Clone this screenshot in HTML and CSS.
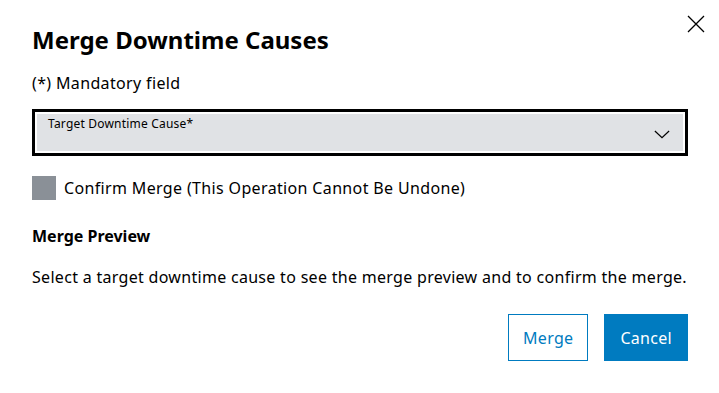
FILE: index.html
```html
<!DOCTYPE html>
<html lang="en">
<head>
    <meta charset="UTF-8">
    <meta name="viewport" content="width=device-width, initial-scale=1.0">
    <title>Merge Downtime Causes</title>
    <link rel="stylesheet" href="styles.css">
</head>
<body>
    <div class="dialog">
        <button class="close-btn" aria-label="Close">
            <svg width="18" height="18" viewBox="0 0 18 18">
                <path d="M1 1 L17 17 M17 1 L1 17" stroke="#000" stroke-width="1.3" fill="none"/>
            </svg>
        </button>
        <h1>Merge Downtime Causes</h1>
        <p class="mandatory">(*) Mandatory field</p>

        <div class="select-wrap">
            <div class="select">
                <span class="select-label">Target Downtime Cause*</span>
                <svg class="chevron" width="18" height="10" viewBox="0 0 18 10">
                    <path d="M1 1 L9 8.5 L17 1" stroke="#000" stroke-width="1.4" fill="none"/>
                </svg>
            </div>
        </div>

        <label class="checkbox-row">
            <span class="checkbox"></span>
            <span>Confirm Merge (This Operation Cannot Be Undone)</span>
        </label>

        <h2>Merge Preview</h2>
        <p class="preview-text">Select a target downtime cause to see the merge preview and to confirm the merge.</p>

        <div class="buttons">
            <button class="btn btn-secondary">Merge</button>
            <button class="btn">Cancel</button>
        </div>
    </div>
</body>
</html>
```

FILE: styles.css
```css
body {
    margin: 0;
    font-family: "Noto Sans", sans-serif;
    background: white;
    color: #000;
}

.dialog {
    position: relative;
    padding: 24px 31px 0 32px;
}

.close-btn {
    position: absolute;
    top: 15px;
    right: 14px;
    background: none;
    border: none;
    padding: 0;
    cursor: pointer;
}

h1 {
    font-size: 24px;
    font-weight: bold;
    margin: 0;
    line-height: 32px;
}

.mandatory {
    font-size: 16px;
    letter-spacing: 0.35px;
    margin: 17px 0 0;
    line-height: 20px;
}

.select-wrap {
    margin-top: 16px;
    border: 3px solid #000;
    padding: 2px;
}

.select {
    background: #e0e2e5;
    height: 37px;
    position: relative;
}

.select-label {
    position: absolute;
    left: 11px;
    top: 1px;
    font-size: 12px;
    letter-spacing: 0.2px;
    color: #000;
}

.chevron {
    position: absolute;
    right: 13px;
    top: 16px;
    width: 16px;
    height: 9px;
}

.checkbox-row {
    display: flex;
    align-items: center;
    gap: 8px;
    margin-top: 20px;
    font-size: 16px;
    letter-spacing: 0.35px;
}

.checkbox {
    width: 24px;
    height: 24px;
    background: #8a9097;
}

h2 {
    font-size: 16px;
    font-weight: bold;
    margin: 24px 0 0;
    line-height: 24px;
}

.preview-text {
    font-size: 16px;
    letter-spacing: 0.3px;
    white-space: nowrap;
    margin: 17px 0 0;
    line-height: 24px;
}

.buttons {
    display: flex;
    justify-content: flex-end;
    gap: 16px;
    margin-top: 25px;
}

.btn {
    height: 47px;
    padding: 0 15px;
    font-family: inherit;
    font-size: 16px;
    letter-spacing: 0.3px;
    background: #007bc0;
    color: white;
    border: 1px solid #007bc0;
    cursor: pointer;
}

.btn-secondary {
    background: white;
    color: #007bc0;
    padding: 0 14px;
}
```
